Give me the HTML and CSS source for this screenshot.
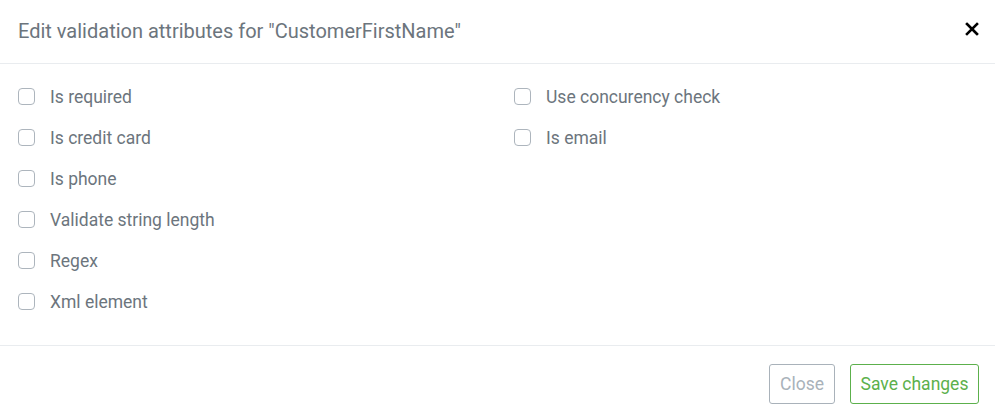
FILE: index.html
```html
<!DOCTYPE html>
<html>
<head>
<meta charset="utf-8">
<link rel="stylesheet" href="styles.css">
</head>
<body>
<div class="modal">
  <div class="modal-header">
    <h5 class="modal-title">Edit validation attributes for "CustomerFirstName"</h5>
    <button class="close-x" aria-label="Close">
      <svg width="14" height="14" viewBox="0 0 14 14"><path d="M2 2 L12 12 M12 2 L2 12" stroke="#000" stroke-width="2.6" stroke-linecap="square"/></svg>
    </button>
  </div>
  <div class="modal-body">
    <div class="col">
      <label class="check"><span class="box"></span><span class="lbl">Is required</span></label>
      <label class="check"><span class="box"></span><span class="lbl">Is credit card</span></label>
      <label class="check"><span class="box"></span><span class="lbl">Is phone</span></label>
      <label class="check"><span class="box"></span><span class="lbl">Validate string length</span></label>
      <label class="check"><span class="box"></span><span class="lbl">Regex</span></label>
      <label class="check"><span class="box"></span><span class="lbl">Xml element</span></label>
    </div>
    <div class="col">
      <label class="check"><span class="box"></span><span class="lbl">Use concurency check</span></label>
      <label class="check"><span class="box"></span><span class="lbl">Is email</span></label>
    </div>
  </div>
  <div class="modal-footer">
    <button class="btn btn-close">Close</button>
    <button class="btn btn-save">Save changes</button>
  </div>
</div>
</body>
</html>
```
FILE: styles.css
```css
* { box-sizing: border-box; }
html, body { margin: 0; padding: 0; background: #fff; }
body { font-family: Roboto, "Liberation Sans", sans-serif; color: #6c757d; }
.modal { width: 995px; }
.modal-header {
  height: 64px;
  display: flex;
  align-items: center;
  justify-content: space-between;
  padding: 0 16px 0 18px;
  border-bottom: 1px solid #e9ecef;
}
.modal-title {
  margin: 0;
  font-size: 20px;
  font-weight: 400;
  color: #6c757d;
  padding-bottom: 1px;
}
.close-x {
  border: 0;
  background: none;
  padding: 0;
  width: 14px;
  height: 14px;
  margin-top: -6px;
  display: flex;
}
.modal-body {
  display: flex;
  padding: 12px 18px 23px;
  border-bottom: 1px solid #e9ecef;
}
.col { width: 496px; flex: none; display: flex; flex-direction: column; }
.col + .col { flex: 1; width: auto; }
.check {
  height: 41px;
  display: flex;
  align-items: center;
  font-size: 17.5px;
}
.box {
  width: 17px;
  height: 17px;
  border: 1px solid #adb5bd;
  border-radius: 4px;
  margin-right: 15px;
  flex: none;
}
.lbl { line-height: 24px; }
.modal-footer {
  display: flex;
  justify-content: flex-end;
  gap: 15px;
  padding: 18px 16px 13px;
}
.btn {
  font-family: Roboto, "Liberation Sans", sans-serif;
  font-size: 17.5px;
  height: 40px;
  padding: 0;
  background: #fff;
  border-radius: 3px;
  line-height: 38px;
  text-align: center;
}
.btn-close { border: 1px solid #a9b2ba; color: #a9b2ba; width: 66px; }
.btn-save { border: 1px solid #5cb04c; color: #5cb04c; width: 129px; }
```
